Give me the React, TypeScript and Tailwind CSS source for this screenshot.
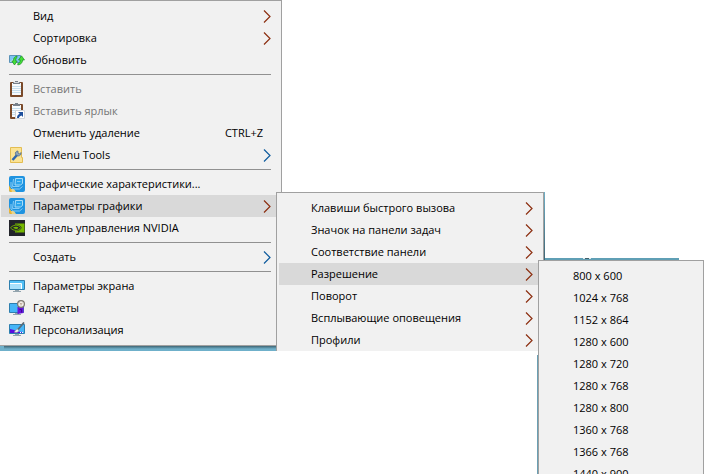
import type { ReactNode } from 'react'

type Entry = {
  label: string
  icon?: ReactNode
  shortcut?: string
  disabled?: boolean
  arrow?: 'warm' | 'cool'
  submenu?: ReactNode
}

const RefreshIcon = () => (
  <svg className="size-4" viewBox="0 0 16 16" aria-hidden="true">
    <path d="M0.5 3.500h11v7h-11z" fill="#7cc4f2" stroke="#5b93b8" />
    <path d="M1 10l3-3 3 2v1z" fill="#c9eafa" />
    <path d="M8 4C5.500 4.500 4.300 6.500 4.300 9H2.800l2.700 4L8.200 9H6.700C6.700 7 7 6 8 5.500z" fill="#45e038" stroke="#1a8f22" strokeWidth=".7" />
    <path d="M8.800 13c3.200-.3 4.800-2.500 4.800-5h1.900L12.500 3.800 9.500 8h1.700c0 2-.8 3-2.400 3.500z" fill="#45e038" stroke="#1a8f22" strokeWidth=".7" />
  </svg>
)

const PasteIcon = () => (
  <svg className="size-4" viewBox="0 0 16 16" aria-hidden="true">
    <rect x="1" y="1" width="13" height="15" rx="1" fill="#7a4a2a" />
    <path d="M3 2h9v12H3z" fill="#f7fbfe" />
    <path d="M3 5.500h9M3 7.500h9M3 9.500h9M3 11.500h9" stroke="#c6dfee" />
    <path d="M4 1h2V0h3v1h2v2H4z" fill="#77808a" />
    <path d="M5 1.500h5" stroke="#d5dade" />
  </svg>
)

const PasteLinkIcon = () => (
  <svg className="size-4" viewBox="0 0 16 16" aria-hidden="true">
    <rect x="1" y="1" width="13" height="15" rx="1" fill="#7a4a2a" />
    <path d="M3 2h9v12H3z" fill="#f7fbfe" />
    <path d="M3 5.500h9M3 7.500h9M3 9.500h9M3 11.500h9" stroke="#c6dfee" />
    <path d="M4 1h2V0h3v1h2v2H4z" fill="#77808a" />
    <path d="M6.500 7.500h9v8h-9z" fill="#fff" stroke="#d0d4d8" />
    <path d="M9 9h5v5l-1.500-1.500C11 13 10 13.800 10 15H8c0-2.500 1-3.500 2.700-4.300z" fill="#1c4f9c" />
  </svg>
)

const ToolsIcon = () => (
  <svg className="size-4" viewBox="0 0 16 16" aria-hidden="true">
    <path d="M1.500 .5h11v10h1v5h-12z" fill="#fbe394" stroke="#e3bd52" />
    <path d="M3.500 13L8.500 7.500" stroke="#2f66ae" strokeWidth="2.500" />
    <path d="M6.500 7.500c-.5-2 .5-3.500 2.500-3.500L9 6l1.500 1 1.500-1.500c.5 2-1 3.500-3 3.500z" fill="#8ba4bd" stroke="#55708c" strokeWidth=".8" />
  </svg>
)

const IntelIcon = () => (
  <svg className="size-4" viewBox="0 0 16 16" aria-hidden="true">
    <rect width="16" height="16" rx="2" fill="#1f93e0" />
    <path d="M0 9v5a2 2 0 0 0 2 2h4C3 15 1 12 0 9z" fill="#f2b632" />
    <path d="M2 13h3l2 3H3z" fill="#e8d48a" />
    <path d="M6.500 2.500h7v5l-2 1.500H6z" fill="#2ba5ec" stroke="#a9ddf9" />
    <path d="M8 5.500h3.500M4.500 3L3.500 10.500h7M2 6v5l2.500 2h6l3-2.500" fill="none" stroke="#86cdf6" />
  </svg>
)

const NvidiaIcon = () => (
  <svg className="size-4" viewBox="0 0 16 16" aria-hidden="true">
    <path d="M0 0h16v16H0z" fill="#22242b" />
    <path d="M6 3.500h9.500v9H6z" fill="#76b900" />
    <path d="M1 7.800C3 5 5 4.500 7.500 4.600c2.500.1 4 1.500 5.300 3.100-1.500 2.300-3.300 3.500-5.600 3.500C4.500 11.200 2.500 10 1 7.800z" fill="#22242b" />
    <path d="M1.500 7.800C3.500 5.400 6 5 7.800 5.200c2 .2 3 1.300 4 2.500-1.200 1.700-2.500 2.600-4.500 2.700C5 10.500 3 9.500 1.500 7.800z" fill="none" stroke="#76b900" strokeWidth=".9" />
    <path d="M4 7.800c1.200-1 2.300-1.300 3.500-1.100 1 .1 1.500.5 2 1-.8 1-1.600 1.400-2.600 1.300C5.800 8.900 5 8.500 4 7.800z" fill="#76b900" />
  </svg>
)

const DisplayIcon = () => (
  <svg className="size-4" viewBox="0 0 16 16" aria-hidden="true">
    <path d="M.5 2.500h15v9H.5z" fill="#52bff5" stroke="#2e7fae" />
    <path d="M1 5h11v6H1z" fill="#a8e0fb" />
    <path d="M1 5.500h11.500V11" fill="none" stroke="#fff" />
    <path d="M6 12h4v1H6zM4 13h8v1H4z" fill="#93a4ae" />
  </svg>
)

const GadgetsIcon = () => (
  <svg className="size-4" viewBox="0 0 16 16" aria-hidden="true">
    <path d="M.5 3.500h14v9H.5z" fill="#45b5f7" stroke="#2e7fae" />
    <path d="M6 13h4v1H6zM4 14h8v1H4z" fill="#93a4ae" />
    <path d="M8.500 7h6v6l-6 1z" fill="#6a12dc" />
    <path d="M10.500 9.500h2v3" fill="none" stroke="#3c0899" />
    <circle cx="12" cy="4" r="3.400" fill="#f2eee8" stroke="#7c7670" strokeWidth="1.200" />
    <path d="M10.500 2.500L12 4l1.500-1M12 4v1.500" fill="none" stroke="#a2887a" strokeWidth=".7" />
  </svg>
)

const PersonalizeIcon = () => (
  <svg className="size-4" viewBox="0 0 16 16" aria-hidden="true">
    <path d="M.5 2.500h15v9H.5z" fill="#45b5f7" stroke="#2e7fae" />
    <path d="M1 7l4 1 3 1.500 5 .5v1H1z" fill="#5a0be0" />
    <path d="M11 10.500h1M13 10.500h1" stroke="#fff" />
    <path d="M6 12h4v1H6zM4 13h8v1H4z" fill="#93a4ae" />
    <path d="M9 7.500L15 .5" stroke="#5d6a73" strokeWidth="1.800" />
    <path d="M5 10c1.500-.3 1.500-2.500 3.200-3l1.600 1.500C9.500 10.500 7 11 5 10z" fill="#f3f3ef" stroke="#8a8f92" strokeWidth=".6" />
  </svg>
)

const Arrow = ({ tone }: { tone: 'warm' | 'cool' }) => (
  <svg className="h-[13px] w-2 shrink-0" viewBox="0 0 8 13" fill="none" aria-hidden="true">
    <path d="M1 .5l6 6-6 6" stroke={tone === 'warm' ? '#8c2f10' : '#0f5c9e'} strokeWidth="1.200" />
  </svg>
)

const Item = ({ entry }: { entry: Entry }) => (
  <li className="relative">
    <button
      type="button"
      disabled={entry.disabled}
      aria-haspopup={entry.arrow ? 'menu' : undefined}
      aria-expanded={entry.submenu ? true : undefined}
      className={`flex h-[22px] w-full items-center gap-2 px-2 text-left whitespace-nowrap disabled:text-[#757575] ${entry.submenu ? 'bg-[#d9d9d9]' : ''}`}
    >
      <span className="size-4 shrink-0">{entry.icon}</span>
      <span className="grow">{entry.label}</span>
      {entry.shortcut && <span className="pr-2">{entry.shortcut}</span>}
      {entry.arrow && <Arrow tone={entry.arrow} />}
    </button>
    {entry.submenu && <div className="absolute -top-[3px] left-full z-10 -ml-[3px]">{entry.submenu}</div>}
  </li>
)

const Group = ({ entries }: { entries: Entry[] }) => (
  <ul>
    {entries.map((entry) => (
      <Item key={entry.label} entry={entry} />
    ))}
  </ul>
)

const Separator = () => <hr className="mx-2 my-[3px] border-t border-[#919191]" />

const resolutions: Entry[] = [
  '800 x 600',
  '1024 x 768',
  '1152 x 864',
  '1280 x 600',
  '1280 x 720',
  '1280 x 768',
  '1280 x 800',
  '1360 x 768',
  '1366 x 768',
  '1440 x 900',
].map((label) => ({ label }))

const ResolutionMenu = () => (
  <div className="relative w-[166px] border border-[#a0a0a0] bg-[#f1f1f1] px-0.5 py-1">
    <div className="absolute -top-[3px] left-1.5 h-0.5 w-[134px] bg-[#5f9fb5] pl-[38px]">
      <div className="h-px w-2 border-x-2 border-[#dfe9ec] bg-[#3f5f6b]" />
    </div>
    <div className="absolute top-[94px] bottom-0 -left-0.5 w-px bg-[#6a9fb3]" />
    <Group entries={resolutions} />
  </div>
)

const graphics: Entry[] = [
  { label: 'Клавиши быстрого вызова', arrow: 'warm' },
  { label: 'Значок на панели задач', arrow: 'warm' },
  { label: 'Соответствие панели', arrow: 'warm' },
  { label: 'Разрешение', arrow: 'warm', submenu: <ResolutionMenu /> },
  { label: 'Поворот', arrow: 'warm' },
  { label: 'Всплывающие оповещения', arrow: 'warm' },
  { label: 'Профили', arrow: 'warm' },
]

const GraphicsMenu = () => (
  <div className="relative w-[268px] border border-b-0 border-[#a0a0a0] bg-[#f1f1f1] px-0.5 pt-1">
    <div className="absolute -top-px -right-0.5 h-[68px] w-px bg-linear-to-b from-[#6fb0c8] to-[#3f6675]" />
    <Group entries={graphics} />
  </div>
)

export default function App() {
  return (
    <main className="h-screen overflow-hidden bg-white font-['Open_Sans','Noto_Sans',sans-serif] text-[11px]/4 text-black">
      <div className="w-[282px]">
        <nav className="border-y border-r border-[#a0a0a0] bg-[#f1f1f1] py-1 pr-0.5 pl-px">
          <Group
            entries={[
              { label: 'Вид', arrow: 'warm' },
              { label: 'Сортировка', arrow: 'warm' },
              { label: 'Обновить', icon: <RefreshIcon /> },
            ]}
          />
          <Separator />
          <Group
            entries={[
              { label: 'Вставить', icon: <PasteIcon />, disabled: true },
              { label: 'Вставить ярлык', icon: <PasteLinkIcon />, disabled: true },
              { label: 'Отменить удаление', shortcut: 'CTRL+Z' },
              { label: 'FileMenu Tools', icon: <ToolsIcon />, arrow: 'cool' },
            ]}
          />
          <Separator />
          <Group
            entries={[
              { label: 'Графические характеристики...', icon: <IntelIcon /> },
              { label: 'Параметры графики', icon: <IntelIcon />, arrow: 'warm', submenu: <GraphicsMenu /> },
              { label: 'Панель управления NVIDIA', icon: <NvidiaIcon /> },
            ]}
          />
          <Separator />
          <Group entries={[{ label: 'Создать', arrow: 'cool' }]} />
          <Separator />
          <Group
            entries={[
              { label: 'Параметры экрана', icon: <DisplayIcon /> },
              { label: 'Гаджеты', icon: <GadgetsIcon /> },
              { label: 'Персонализация', icon: <PersonalizeIcon /> },
            ]}
          />
        </nav>
        <div className="h-[5px] bg-[#6fb0ca] pl-1">
          <div className="h-[3px] bg-linear-to-b from-[#3f6675] to-[#6fb0ca]" />
        </div>
      </div>
    </main>
  )
}
